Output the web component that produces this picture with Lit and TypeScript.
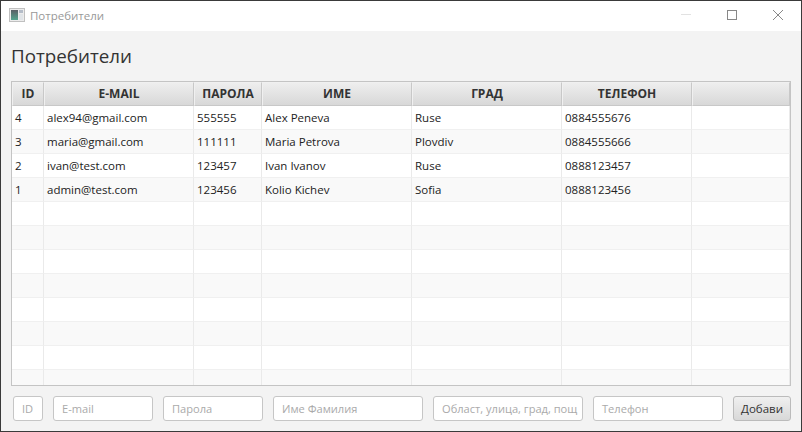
import { LitElement, html, css } from "lit";
import { customElement } from "lit/decorators.js";

const cols = [
  { t: "ID", w: 32 },
  { t: "E-MAIL", w: 150 },
  { t: "ПАРОЛА", w: 68 },
  { t: "ИМЕ", w: 150 },
  { t: "ГРАД", w: 150 },
  { t: "ТЕЛЕФОН", w: 130 },
  { t: "", w: 98 },
];
const data = [
  ["4", "alex94@gmail.com", "555555", "Alex Peneva", "Ruse", "0884555676", ""],
  ["3", "maria@gmail.com", "111111", "Maria Petrova", "Plovdiv", "0884555666", ""],
  ["2", "ivan@test.com", "123457", "Ivan Ivanov", "Ruse", "0888123457", ""],
  ["1", "admin@test.com", "123456", "Kolio Kichev", "Sofia", "0888123456", ""],
];
const rows = [...data, ...Array.from({ length: 8 }, () => ["", "", "", "", "", "", ""])];
const fields = [
  { p: "ID", w: 30 },
  { p: "E-mail", w: 100 },
  { p: "Парола", w: 100 },
  { p: "Име Фамилия", w: 150 },
  { p: "Област, улица, град, пощ", w: 150 },
  { p: "Телефон", w: 130 },
];

@customElement("app-root")
export class AppRoot extends LitElement {
  static styles = css`
    :host { display: block; width: 802px; height: 432px; overflow: hidden; background: #3a3a3a;
      font-family: "Open Sans", "Noto Sans", sans-serif; font-size: 11.5px; color: #333; }
    .win { margin: 1px; height: 430px; display: flex; flex-direction: column; background: #f3f3f3; overflow: hidden; }
    .titlebar { box-sizing: border-box; height: 30px; flex: none; background: #fff; display: flex; align-items: center; padding: 0 0 2px 8px; color: #999; }
    .appicon { width: 16px; height: 16px; margin-right: 5px; flex: none; }
    .grow { flex: 1; }
    .ctl { width: 46px; height: 28px; display: flex; align-items: center; justify-content: center; }
    .content { flex: 1; display: flex; flex-direction: column; padding: 0 10px; min-height: 0; }
    h1 { margin: 0; height: 50px; flex: none; font-weight: 400; font-size: 18.8px; line-height: 50px; color: #333; }
    .table { height: 305px; flex: none; border: 1px solid #c4c4c4; box-sizing: border-box; background: #fff; overflow: hidden; }
    .row { display: flex; height: 24px; }
    .row.alt { background: #f9f9f9; }
    .hcell { box-sizing: border-box; height: 24px; flex: none; background: linear-gradient(#eeeeee, #d8d8d8);
      border: 1px solid #f0f0f0; border-right-color: #c8c8c8; border-bottom-color: #c8c8c8;
      text-align: center; line-height: 22px; font-size: 12px; font-weight: 700; color: #333; }
    .cell { box-sizing: border-box; height: 24px; flex: none; border-right: 1px solid #eaeaea; border-bottom: 1px solid #f0f0f0;
      padding-left: 3px; line-height: 24px; white-space: nowrap; overflow: hidden; color: #222; }
    .form { flex: 1; display: flex; align-items: center; padding-left: 2px; gap: 10px; }
    .field { box-sizing: border-box; height: 25px; border: 1px solid #c6c6c6; border-radius: 3px; background: #fff;
      padding: 0 6px 0 8px; line-height: 23px; font-size: 11.1px; color: #aaa; white-space: nowrap; flex: none; }
    .btn { box-sizing: border-box; width: 58px; height: 25px; border: 1px solid #bbb; border-radius: 3px;
      background: linear-gradient(#f0f0f0, #d8d8d8); color: #333; text-align: center; line-height: 23px; flex: none; }
  `;

  render() {
    return html`<div class="win">
      <div class="titlebar">
        <svg class="appicon" viewBox="0 0 16 16">
          <defs>
            <linearGradient id="g" x1="0" y1="0" x2="0" y2="1">
              <stop offset="0" stop-color="#5a5f66" />
              <stop offset="1" stop-color="#55a58f" />
            </linearGradient>
          </defs>
          <rect x="0.5" y="1.5" width="15" height="13" fill="#ececec" stroke="#c0c0c0" />
          <rect x="2" y="3" width="7" height="10" fill="url(#g)" />
          <rect x="10" y="3" width="4" height="3" fill="#b4bcc8" />
          <rect x="10" y="7" width="4" height="6" fill="#e0e4e8" />
        </svg>
        <span>Потребители</span>
        <span class="grow"></span>
        <div class="ctl"><svg width="12" height="2"><path d="M1 .5H11" stroke="#e2e2e2" /></svg></div>
        <div class="ctl"><svg width="10" height="10"><rect x=".5" y=".5" width="9" height="9" fill="none" stroke="#888" /></svg></div>
        <div class="ctl"><svg width="12" height="12"><path d="M1 1L11 11M11 1L1 11" stroke="#888" /></svg></div>
      </div>
      <div class="content">
        <h1>Потребители</h1>
        <div class="table">
          <div class="row">
            ${cols.map((c) => html`<div class="hcell" style="width:${c.w}px">${c.t}</div>`)}
          </div>
          ${rows.map(
            (r, i) => html`<div class="row ${i % 2 ? "alt" : ""}">
              ${r.map((v, j) => html`<div class="cell" style="width:${cols[j].w}px">${v}</div>`)}
            </div>`
          )}
        </div>
        <div class="form">
          ${fields.map((f) => html`<div class="field" style="width:${f.w}px">${f.p}</div>`)}
          <div class="btn">Добави</div>
        </div>
      </div>
    </div>`;
  }
}
